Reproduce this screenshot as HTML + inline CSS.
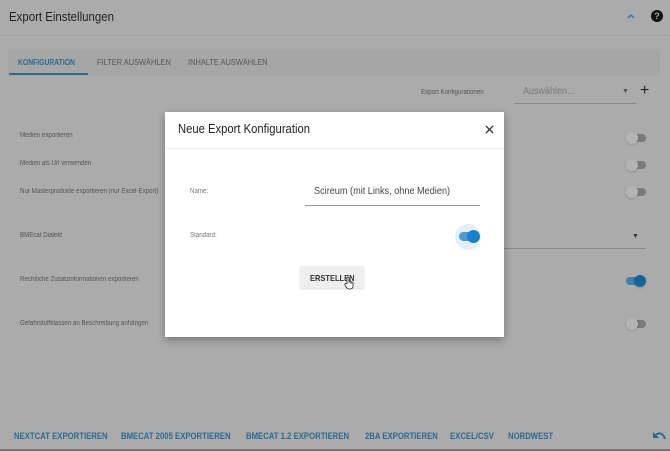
<!DOCTYPE html>
<html><head><style>
*{margin:0;padding:0;box-sizing:border-box}
body{width:670px;height:451px;overflow:hidden;background:#ababab;font-family:"Liberation Sans",sans-serif;position:relative;color:#444}
.a{position:absolute;white-space:nowrap;transform-origin:left}
.s{font-size:7px;color:#555;transform:scaleX(.88)}
.off{position:absolute;width:20px;height:12px}
.off .t{position:absolute;left:6px;top:2px;width:14px;height:8px;border-radius:4px;background:#7a7a7a}
.off .k{position:absolute;left:0;top:0;width:12px;height:12px;border-radius:50%;background:#b4b4b4;box-shadow:0 1px 2px rgba(0,0,0,.15)}
.on .t{position:absolute;left:0;top:2px;width:16px;height:8px;border-radius:4px;background:#3f7fa8}
.on .k{position:absolute;left:8px;top:0;width:12px;height:12px;border-radius:50%;background:#13639a}
.bt{font-size:9px;font-weight:bold;color:#2c6a90;top:431px;transform:scaleX(.86)}
</style></head><body>
<div class="a" style="left:9px;top:9px;font-size:13px;color:#222;transform:scaleX(.88)">Export Einstellungen</div>
<svg class="a" style="left:627px;top:13px" width="8" height="6" viewBox="0 0 8 6"><path d="M1 5 L4 2 L7 5" fill="none" stroke="#3f7fa8" stroke-width="1.6"/></svg>
<div class="a" style="left:651px;top:10px;width:12px;height:12px;border-radius:50%;background:#111;color:#aaa;font-size:9px;font-weight:bold;text-align:center;line-height:12px">?</div>
<div class="a" style="left:0;top:35px;width:670px;height:1px;background:#a0a0a0"></div>
<div class="a" style="left:8px;top:50px;width:652px;height:26px;background:#a6a6a6"></div>
<div class="a" style="left:18px;top:58px;font-size:8px;font-weight:bold;color:#2c6a90;transform:scaleX(.85)">KONFIGURATION</div>
<div class="a" style="left:9px;top:73px;width:79px;height:2px;background:#2c6a90"></div>
<div class="a" style="left:97px;top:58px;font-size:8px;color:#555;transform:scaleX(.93)">FILTER AUSWÄHLEN</div>
<div class="a" style="left:188px;top:58px;font-size:8px;color:#555;transform:scaleX(.93)">INHALTE AUSWÄHLEN</div>
<div class="a s" style="left:421px;top:89px">Export Konfigurationen</div>
<div class="a" style="left:523px;top:86px;font-size:10px;color:#777;transform:scaleX(.9)">Auswählen...</div>
<div class="a" style="left:622px;top:88px;font-size:7px;color:#555">▼</div>
<div class="a" style="left:515px;top:103px;width:121px;height:1px;background:#888"></div>
<div class="a" style="left:640px;top:82px;font-size:16px;color:#222">+</div>
<div class="a s" style="left:20px;top:132px">Medien exportieren</div>
<div class="a s" style="left:20px;top:160px">Medien als Url verwenden</div>
<div class="a s" style="left:20px;top:188px">Nur Masterprodukte exportieren (nur Excel-Export)</div>
<div class="a s" style="left:20px;top:232px">BMEcat Dialekt</div>
<div class="a s" style="left:20px;top:276px">Rechtliche Zusatzinformationen exportieren</div>
<div class="a s" style="left:20px;top:320px">Gefahrstoffklassen an Beschreibung anhängen</div>
<div class="off" style="left:626px;top:132px"><div class="t"></div><div class="k"></div></div>
<div class="off" style="left:626px;top:159px"><div class="t"></div><div class="k"></div></div>
<div class="off" style="left:626px;top:186px"><div class="t"></div><div class="k"></div></div>
<div class="a" style="left:632px;top:233px;font-size:7px;color:#333">▼</div>
<div class="a" style="left:480px;top:248px;width:165px;height:1px;background:#888"></div>
<div class="off on" style="left:626px;top:275px"><div class="t"></div><div class="k"></div></div>
<div class="off" style="left:626px;top:318px"><div class="t"></div><div class="k"></div></div>
<div class="a bt" style="left:14px">NEXTCAT EXPORTIEREN</div>
<div class="a bt" style="left:121px">BMECAT 2005 EXPORTIEREN</div>
<div class="a bt" style="left:246px">BMECAT 1.2 EXPORTIEREN</div>
<div class="a bt" style="left:365px">2BA EXPORTIEREN</div>
<div class="a bt" style="left:450px">EXCEL/CSV</div>
<div class="a bt" style="left:508px">NORDWEST</div>
<svg class="a" style="left:653px;top:431px" width="13" height="10" viewBox="0 0 13 10"><path d="M3 4 C6 1 10 2 12 8" fill="none" stroke="#2c6a90" stroke-width="2"/><path d="M0 1 L0 7 L6 7 Z" fill="#2c6a90"/></svg>
<div class="a" style="left:0;top:449px;width:670px;height:2px;background:#777"></div>
<div class="a" style="left:165px;top:112px;width:339px;height:225px;background:#fff;box-shadow:0 3px 8px rgba(0,0,0,.3)">
<div class="a" style="left:13px;top:10px;font-size:12.5px;color:#222;transform:scaleX(.9)">Neue Export Konfiguration</div>
<svg class="a" style="left:320px;top:13px" width="9" height="9" viewBox="0 0 9 9"><path d="M1 1L8 8M8 1L1 8" stroke="#333" stroke-width="1.3"/></svg>
<div class="a" style="left:0;top:36px;width:339px;height:1px;background:#eee"></div>
<div class="a s" style="left:25px;top:76px;color:#777">Name:</div>
<div class="a" style="left:149px;top:73px;font-size:10.5px;color:#444;transform:scaleX(.87)">Scireum (mit Links, ohne Medien)</div>
<div class="a" style="left:140px;top:93px;width:175px;height:1px;background:#999"></div>
<div class="a s" style="left:25px;top:120px;color:#777">Standard:</div>
<div class="a" style="left:290px;top:112px;width:26px;height:26px;border-radius:50%;background:#e3f0f9"></div>
<div class="a" style="left:294px;top:120px;width:16px;height:9px;border-radius:5px;background:#4a9cd6"></div>
<div class="a" style="left:302px;top:118px;width:13px;height:13px;border-radius:50%;background:#1a80c8"></div>
<div class="a" style="left:135px;top:154px;width:64px;height:22px;background:#eee;border-radius:2px;box-shadow:0 1px 2px rgba(0,0,0,.15)"></div>
<div class="a" style="left:145px;top:161px;font-size:8.5px;font-weight:bold;color:#333;transform:scaleX(.88)">ERSTELLEN</div>
<svg class="a" style="left:179px;top:164px" width="10" height="14" viewBox="0 0 10 14"><path d="M3 8 V2 a1 1 0 0 1 2 0 V7 M5 6 a1 1 0 0 1 2 0 V8 M7 7 a1 1 0 0 1 2 0 V10 C9 12 8 13 6 13 H5 C3 13 2 11 1 9 a1 1 0 0 1 2 -1" fill="#fff" stroke="#222" stroke-width=".8"/></svg>
</div>
</body></html>
